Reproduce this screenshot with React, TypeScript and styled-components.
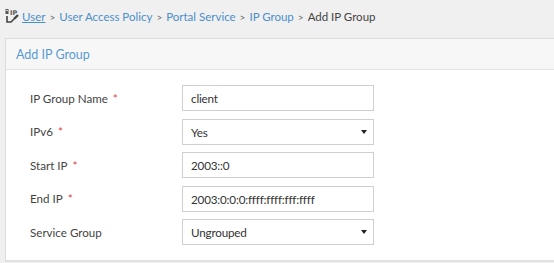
import styled, { createGlobalStyle } from "styled-components";

const GlobalStyle = createGlobalStyle`
  html, body {
    margin: 0;
    padding: 0;
    background: #f0f0f0;
    overflow: hidden;
  }
  body {
    font-family: Lato, "Open Sans", "DejaVu Sans", sans-serif;
    color: #333;
  }
`;

type Field = {
  label: string;
  required: boolean;
  value: string;
  select?: boolean;
};

const fields: Field[] = [
  { label: "IP Group Name", required: true, value: "client" },
  { label: "IPv6", required: true, value: "Yes", select: true },
  { label: "Start IP", required: true, value: "2003::0" },
  { label: "End IP", required: true, value: "2003:0:0:0:ffff:ffff:fff:ffff" },
  { label: "Service Group", required: false, value: "Ungrouped", select: true },
];

const crumbs = ["User", "User Access Policy", "Portal Service", "IP Group"];

const IpIcon = () => (
  <svg width="16" height="16" viewBox="0 0 16 16">
    <rect x="0.5" y="1" width="3" height="5" fill="#555" />
    <rect x="1" y="2" width="2" height="1" fill="#ddd" />
    <text x="5" y="6.5" fontSize="6.5" fontFamily="DejaVu Sans" fontWeight="bold" fill="#555">
      IP
    </text>
    <path d="M2 8 v6 h4 l3 -3" stroke="#444" strokeWidth="1.6" fill="none" />
    <path d="M9 11 l4 -4" stroke="#444" strokeWidth="2.4" fill="none" />
  </svg>
);

const App = () => {
  return (
    <>
      <GlobalStyle />
      <Breadcrumb>
        <IconWrap>
          <IpIcon />
        </IconWrap>
        {crumbs.map((c, i) => (
          <span key={c}>
            <Crumb first={i === 0}>{c}</Crumb>
            <Sep>&gt;</Sep>
          </span>
        ))}
        <Current>Add IP Group</Current>
      </Breadcrumb>
      <Panel>
        <PanelHeader>Add IP Group</PanelHeader>
        <Form>
          {fields.map((f) => (
            <Row key={f.label}>
              <Label>
                {f.label}
                {f.required && <Star>*</Star>}
              </Label>
              <Input>
                <Value>{f.value}</Value>
                {f.select && <Caret />}
              </Input>
            </Row>
          ))}
        </Form>
      </Panel>
    </>
  );
};

export default App;

const Breadcrumb = styled.div`
  height: 38px;
  display: flex;
  align-items: center;
  padding-left: 5px;
  padding-bottom: 5px;
  box-sizing: border-box;
  font-size: 11.5px;
  white-space: nowrap;
`;
const IconWrap = styled.span`
  display: flex;
  flex: none;
  width: 17px;
  margin-top: -1px;
  svg {
    flex: none;
  }
`;
const Crumb = styled.a<{ first: boolean }>`
  color: #4a8fcb;
  text-decoration: ${(p) => (p.first ? "underline" : "none")};
  cursor: pointer;
`;
const Sep = styled.span`
  color: #666;
  margin: 0 4px;
  font-size: 10px;
`;
const Current = styled.span`
  color: #444;
`;
const Panel = styled.div`
  margin-left: 5px;
  border: 1px solid #dcdcdc;
  border-right: none;
  border-bottom: 2px solid #e2e2e2;
  background: #fff;
`;
const PanelHeader = styled.div`
  height: 30px;
  display: flex;
  align-items: center;
  padding-left: 10px;
  background: #f7f7f7;
  border-bottom: 1px solid #e2e2e2;
  color: #5a9ad2;
  font-size: 12.5px;
`;
const Form = styled.div`
  display: flex;
  flex-direction: column;
  gap: 7.5px;
  padding: 15px 0 15px 24px;
`;
const Row = styled.div`
  display: grid;
  grid-template-columns: 152px 192px;
  align-items: center;
`;
const Label = styled.div`
  font-size: 11.6px;
  color: #444;
`;
const Star = styled.span`
  color: #e0474c;
  margin-left: 5px;
  font-size: 12px;
`;
const Input = styled.div`
  height: 26px;
  box-sizing: border-box;
  border: 1px solid #cfcfcf;
  display: flex;
  align-items: center;
  justify-content: space-between;
  padding: 0 6px 0 8px;
  font-size: 11.7px;
  color: #333;
`;
const Value = styled.span`
  letter-spacing: -0.2px;
`;
const Caret = styled.span`
  width: 0;
  height: 0;
  border-left: 3.5px solid transparent;
  border-right: 3.5px solid transparent;
  border-top: 4px solid #222;
`;
